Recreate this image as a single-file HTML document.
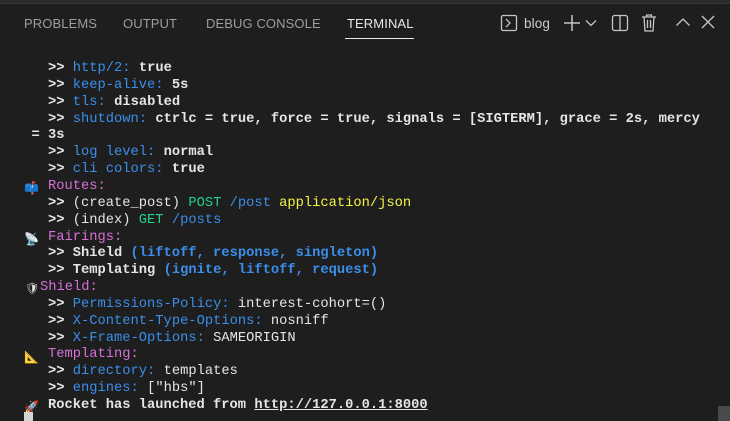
<!DOCTYPE html>
<html><head><meta charset="utf-8"><style>
html,body{margin:0;padding:0;background:#1e1e1e;width:730px;height:421px;overflow:hidden;position:relative}
.top{position:absolute;left:0;top:0;width:730px;height:3px;background:#2b2b2b;border-bottom:1px solid #3a3a3a}
.tab{position:absolute;top:16px;font:13px "Liberation Sans",sans-serif;color:#9d9d9d;letter-spacing:0.1px}
.ul{position:absolute;left:345px;top:38px;width:69px;height:1px;background:#e7e7e7}
.term{position:absolute;left:0;top:61px;font:13.75px/16.85px "Liberation Mono",monospace;color:#e5e5e5;white-space:pre}
.l{position:absolute;left:31.5px;white-space:pre}
.b{color:#3b8eea}.m{color:#d670d6}.g{color:#23d18b}.y{color:#f5f543}.w{font-weight:bold}.c{color:#e5e5e5}
.e{position:absolute;left:24px;font-size:12px;font-family:"DejaVu Sans",sans-serif}
.ic{position:absolute;stroke:#c5c5c5;fill:none;stroke-width:1.3}
</style></head><body>
<div class="top"></div>
<div class="tab" style="left:24px">PROBLEMS</div>
<div class="tab" style="left:123px">OUTPUT</div>
<div class="tab" style="left:206px">DEBUG CONSOLE</div>
<div class="tab" style="left:347px;color:#e7e7e7">TERMINAL</div>
<div class="ul"></div>
<svg class="ic" style="left:500px;top:14px" width="18" height="18" viewBox="0 0 18 18"><rect x="1.5" y="1.5" width="15" height="15" rx="1.5"/><path d="M6 5l4 4-4 4"/></svg>
<div class="tab" style="left:524px;top:16px;color:#cccccc;font-size:13.5px">blog</div>
<svg class="ic" style="left:563px;top:14px" width="18" height="18" viewBox="0 0 18 18"><path d="M9 1v16M1 9h16" stroke-width="1.5"/></svg>
<svg class="ic" style="left:585px;top:19px" width="12" height="8" viewBox="0 0 12 8"><path d="M1 1.5l5 5 5-5"/></svg>
<svg class="ic" style="left:611px;top:14px" width="18" height="18" viewBox="0 0 18 18"><rect x="1.5" y="1.5" width="15" height="15" rx="2"/><path d="M9 1.5v15"/></svg>
<svg class="ic" style="left:641px;top:13px" width="16" height="20" viewBox="0 0 16 20"><path d="M1 4h14M5.5 4V2h5v2M3 4l1 14h8l1-14M6.5 7v8M9.5 7v8"/></svg>
<svg class="ic" style="left:675px;top:17px" width="16" height="10" viewBox="0 0 16 10"><path d="M1.5 8.5l6.5-6.5 6.5 6.5"/></svg>
<svg class="ic" style="left:701px;top:15px" width="14" height="14" viewBox="0 0 14 14"><path d="M1 1l12 12M13 1L1 13"/></svg>
<div class="term">
<div class="l" style="top:0">  <span class="w">&gt;&gt;</span> <span class="b">http/2:</span> <span class="w">true</span></div>
<div class="l" style="top:16.85px">  <span class="w">&gt;&gt;</span> <span class="b">keep-alive:</span> <span class="w">5s</span></div>
<div class="l" style="top:33.7px">  <span class="w">&gt;&gt;</span> <span class="b">tls:</span> <span class="w">disabled</span></div>
<div class="l" style="top:50.55px">  <span class="w">&gt;&gt;</span> <span class="b">shutdown:</span> <span class="w">ctrlc = true, force = true, signals = [SIGTERM], grace = 2s, mercy</span></div>
<div class="l" style="top:67.4px"><span class="w">= 3s</span></div>
<div class="l" style="top:84.25px">  <span class="w">&gt;&gt;</span> <span class="b">log level:</span> <span class="w">normal</span></div>
<div class="l" style="top:101.1px">  <span class="w">&gt;&gt;</span> <span class="b">cli colors:</span> <span class="w">true</span></div>
<div class="e" style="top:119px">📫</div>
<div class="l" style="top:117.95px">  <span class="m">Routes:</span></div>
<div class="l" style="top:134.8px">  <span class="w">&gt;&gt;</span> (create_post) <span class="g">POST</span> <span class="b">/post</span> <span class="y">application/json</span></div>
<div class="l" style="top:151.65px">  <span class="w">&gt;&gt;</span> (index) <span class="g">GET</span> <span class="b">/posts</span></div>
<div class="e" style="top:169.5px">📡</div>
<div class="l" style="top:168.5px">  <span class="m">Fairings:</span></div>
<div class="l" style="top:185.35px">  <span class="w">&gt;&gt; Shield</span> <span class="b w">(liftoff, response, singleton)</span></div>
<div class="l" style="top:202.2px">  <span class="w">&gt;&gt; Templating</span> <span class="b w">(ignite, liftoff, request)</span></div>
<div class="e" style="top:220px;left:25px;font-size:11px">🛡</div>
<div class="l" style="top:219.05px;left:40px"><span class="m">Shield:</span></div>
<div class="l" style="top:235.9px">  <span class="w">&gt;&gt;</span> <span class="b">Permissions-Policy:</span> interest-cohort=()</div>
<div class="l" style="top:252.75px">  <span class="w">&gt;&gt;</span> <span class="b">X-Content-Type-Options:</span> nosniff</div>
<div class="l" style="top:269.6px">  <span class="w">&gt;&gt;</span> <span class="b">X-Frame-Options:</span> SAMEORIGIN</div>
<div class="e" style="top:287.5px">📐</div>
<div class="l" style="top:286.45px">  <span class="m">Templating:</span></div>
<div class="l" style="top:303.3px">  <span class="w">&gt;&gt;</span> <span class="b">directory:</span> templates</div>
<div class="l" style="top:320.15px">  <span class="w">&gt;&gt;</span> <span class="b">engines:</span> ["hbs"]</div>
<div class="e" style="top:338px">🚀</div>
<div class="l" style="top:337px">  <span class="w">Rocket has launched from <span style="text-decoration:underline">http://127.0.0.1:8000</span></span></div>
</div>
<div style="position:absolute;left:24px;top:412px;width:9px;height:9px;background:#d4d4d4"></div>
<div style="position:absolute;left:718px;top:406px;width:12px;height:15px;background:#4a4a4a"></div>
</body></html>
